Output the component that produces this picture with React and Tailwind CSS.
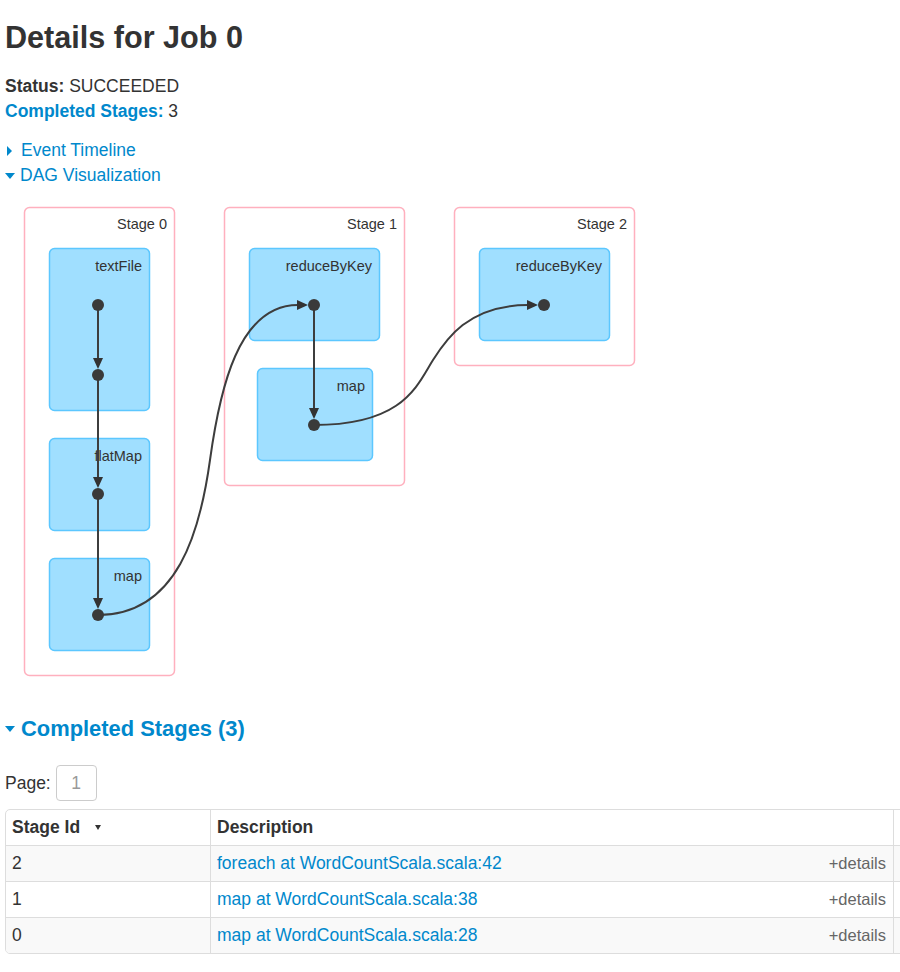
import React from "react";

const ops = [
  { x: 49, y: 248, w: 100, h: 162, label: "textFile" },
  { x: 49, y: 438, w: 100, h: 92, label: "flatMap" },
  { x: 49, y: 558, w: 100, h: 92, label: "map" },
  { x: 249, y: 248, w: 130, h: 92, label: "reduceByKey" },
  { x: 257, y: 368, w: 115, h: 92, label: "map" },
  { x: 479, y: 248, w: 130, h: 92, label: "reduceByKey" },
];

const stages = [
  { x: 24, y: 207, w: 150, h: 468, label: "Stage 0" },
  { x: 224, y: 207, w: 180, h: 278, label: "Stage 1" },
  { x: 454, y: 207, w: 180, h: 158, label: "Stage 2" },
];

const dots = [
  [98, 305],
  [98, 375],
  [98, 494],
  [98, 615],
  [314, 305],
  [314, 425],
  [544, 305],
];

const rows = [
  { id: "2", desc: "foreach at WordCountScala.scala:42", shade: true },
  { id: "1", desc: "map at WordCountScala.scala:38", shade: false },
  { id: "0", desc: "map at WordCountScala.scala:28", shade: true },
];

function DownArrow({ x, y1, y2 }) {
  return (
    <g>
      <line x1={x} y1={y1} x2={x} y2={y2 - 8} stroke="#3d3d3d" strokeWidth="2" />
      <polygon points={`${x - 5},${y2 - 17} ${x + 5},${y2 - 17} ${x},${y2 - 6}`} fill="#333" />
    </g>
  );
}

function DagViz() {
  return (
    <svg width="900" height="502" viewBox="0 188 900 502" className="block">
      {stages.map((s) => (
        <g key={s.label}>
          <rect x={s.x + 0.5} y={s.y + 0.5} width={s.w} height={s.h} rx="5" fill="#fff" stroke="#ffb0be" strokeWidth="1.5" />
          <text x={s.x + s.w - 7} y={s.y + 22} textAnchor="end" fontSize="14.5" fill="#333" fontFamily="'Liberation Sans', Arial, sans-serif">
            {s.label}
          </text>
        </g>
      ))}
      {ops.map((o, i) => (
        <g key={i}>
          <rect x={o.x + 0.5} y={o.y + 0.5} width={o.w} height={o.h} rx="5" fill="#a0dfff" stroke="#5cc7ff" strokeWidth="1.5" />
          <text x={o.x + o.w - 7} y={o.y + 23} textAnchor="end" fontSize="14.5" fill="#333" fontFamily="'Liberation Sans', Arial, sans-serif">
            {o.label}
          </text>
        </g>
      ))}
      <DownArrow x={98} y1={305} y2={375} />
      <DownArrow x={98} y1={375} y2={494} />
      <DownArrow x={98} y1={494} y2={615} />
      <DownArrow x={314} y1={305} y2={425} />
      <path d="M98,615 C178,615 200.3,530 210,460 C219.7,390 238,305 298,305" fill="none" stroke="#3d3d3d" strokeWidth="2" />
      <polygon points="297,300 297,310 308,305" fill="#333" />
      <path d="M314,425 C404,425 417.25,385 433,360 C445.6,340 468,305 528,305" fill="none" stroke="#3d3d3d" strokeWidth="2" />
      <polygon points="527,300 527,310 538,305" fill="#333" />
      {dots.map(([cx, cy], i) => (
        <circle key={i} cx={cx} cy={cy} r="6" fill="#3a3a3a" />
      ))}
    </svg>
  );
}

export default function App() {
  return (
    <div
      className="w-[900px] h-[972px] overflow-hidden bg-white text-[#333] text-[17.5px] leading-[25px]"
      style={{ fontFamily: "'Liberation Sans', Arial, sans-serif" }}
    >
      <h3 className="pl-[5px] pt-[17px] text-[30.6px] leading-[40px] font-bold text-[#333]">Details for Job 0</h3>

      <div className="pl-[5px] mt-[17px]">
        <div>
          <span className="font-bold">Status:</span> SUCCEEDED
        </div>
        <div>
          <span className="font-bold text-[#0088cc]">Completed Stages:</span> 3
        </div>
      </div>

      <div className="mt-[14px]">
        <div className="flex items-center pl-[7px] text-[#0088cc]">
          <span className="w-0 h-0 border-y-[5px] border-y-transparent border-l-[5px] border-l-[#0088cc]" />
          <span className="ml-[9px]">Event Timeline</span>
        </div>
        <div className="flex items-center pl-[5px] text-[#0088cc]">
          <span className="w-0 h-0 border-x-[5.5px] border-x-transparent border-t-[6px] border-t-[#0088cc] mt-[1px]" />
          <span className="ml-[5px]">DAG Visualization</span>
        </div>
      </div>

      <DagViz />

      <div className="flex items-center pl-[5px] mt-[24px] text-[#0088cc] text-[21.9px] leading-[30px] font-bold">
        <span className="w-0 h-0 border-x-[5.5px] border-x-transparent border-t-[6px] border-t-[#0088cc]" />
        <span className="ml-[6px]">Completed Stages (3)</span>
      </div>

      <div className="flex items-center pl-[5px] mt-[21px] h-[36px]">
        <span>Page:</span>
        <span className="ml-[5px] w-[41px] h-[36px] flex items-center justify-center border border-[#ccc] rounded-[4px] text-[#999]">
          1
        </span>
      </div>

      <div className="ml-[5px] mt-[8px] w-[1200px] border border-[#ddd] rounded-[5px] overflow-hidden">
        <div className="flex h-[35px] items-center font-bold">
          <div className="w-[204px] pl-[6px] flex items-center">
            Stage Id
            <span className="ml-[15px] w-0 h-0 border-x-[3.5px] border-x-transparent border-t-[5px] border-t-[#333]" />
          </div>
          <div className="w-[683px] h-full border-l border-[#ddd] pl-[6px] flex items-center">Description</div>
          <div className="flex-1 h-full border-l border-[#ddd]" />
        </div>
        {rows.map((r) => (
          <div key={r.id} className={`flex h-[36px] border-t border-[#ddd] items-center ${r.shade ? "bg-[#f9f9f9]" : "bg-white"}`}>
            <div className="w-[204px] pl-[6px]">{r.id}</div>
            <div className="w-[683px] h-full border-l border-[#ddd] pl-[6px] pr-[7px] flex items-center justify-between">
              <a className="text-[#0088cc]">{r.desc}</a>
              <span className="text-[#666] text-[16.5px]">+details</span>
            </div>
            <div className="flex-1 h-full border-l border-[#ddd]" />
          </div>
        ))}
      </div>
    </div>
  );
}
